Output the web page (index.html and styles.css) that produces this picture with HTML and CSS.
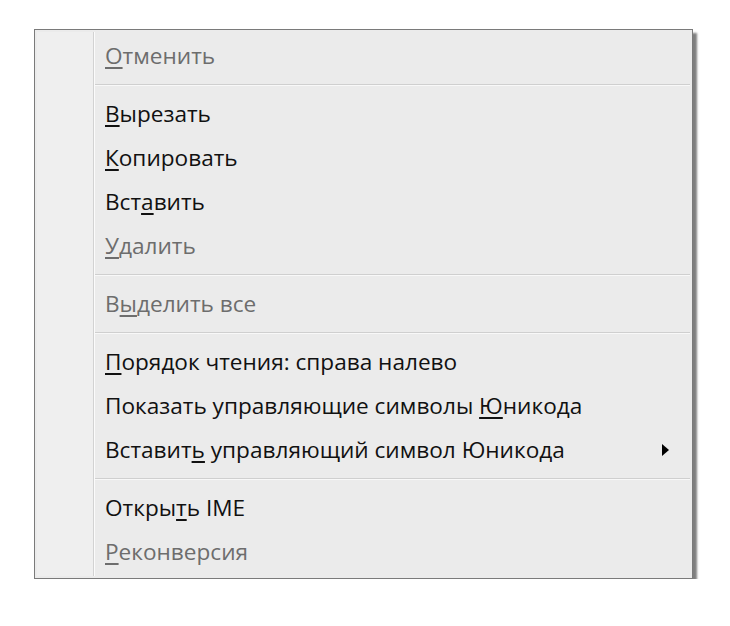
FILE: index.html
```html
<!DOCTYPE html>
<html lang="ru">
<head>
<meta charset="utf-8">
<title>Контекстное меню</title>
<link rel="stylesheet" href="styles.css">
</head>
<body>
<div class="menu">
  <div class="gutter"></div>
  <div class="list">
    <div class="item disabled"><span><u>О</u>тменить</span></div>
    <div class="sep"></div>
    <div class="item"><span><u>В</u>ырезать</span></div>
    <div class="item"><span><u>К</u>опировать</span></div>
    <div class="item"><span>Вст<u>а</u>вить</span></div>
    <div class="item disabled"><span><u>У</u>далить</span></div>
    <div class="sep"></div>
    <div class="item disabled"><span>В<u>ы</u>делить все</span></div>
    <div class="sep"></div>
    <div class="item"><span><u>П</u>орядок чтения: справа налево</span></div>
    <div class="item"><span>Показать управляющие символы <u>Ю</u>никода</span></div>
    <div class="item"><span>Вставит<u>ь</u> управляющий символ Юникода</span><svg class="arrow" width="8" height="12" viewBox="0 0 8 12"><polygon points="0,0 7,6 0,12" fill="#000"/></svg></div>
    <div class="sep"></div>
    <div class="item"><span>Откры<u>т</u>ь IME</span></div>
    <div class="item disabled"><span><u>Р</u>еконверсия</span></div>
  </div>
</div>
</body>
</html>
```

FILE: styles.css
```css
html, body {
  margin: 0;
  padding: 0;
  background: #ffffff;
}

body {
  padding: 29px 0 0 34px;
  font-family: "Open Sans", "Noto Sans", sans-serif;
}

.menu {
  box-sizing: border-box;
  width: 659px;
  display: flex;
  padding: 2px;
  background: #ebebeb;
  border: 1px solid #7a7a7a;
  box-shadow: 4px 4px 2px rgba(0, 0, 0, 0.5);
}

.gutter {
  width: 56px;
  flex: none;
  background: #efefef;
  border-right: 1px solid #d2d2d2;
  box-shadow: 1px 0 0 #fbfbfb;
}

.list {
  flex: 1;
  padding: 2px 0 2px 1px;
}

.item {
  display: flex;
  align-items: center;
  height: 44px;
  line-height: 44px;
  padding: 0 20px 0 10px;
  font-size: 22.6px;
  color: #111111;
  white-space: nowrap;
}

.item.disabled {
  color: #6d6d6d;
}

.item u {
  text-decoration-thickness: 1.5px;
  text-underline-offset: 3px;
}

.arrow {
  margin-left: auto;
}

.sep {
  height: 1px;
  margin: 6px 0 6px 0;
  background: #cfcfcf;
  border-bottom: 1px solid #f8f8f8;
}
```
